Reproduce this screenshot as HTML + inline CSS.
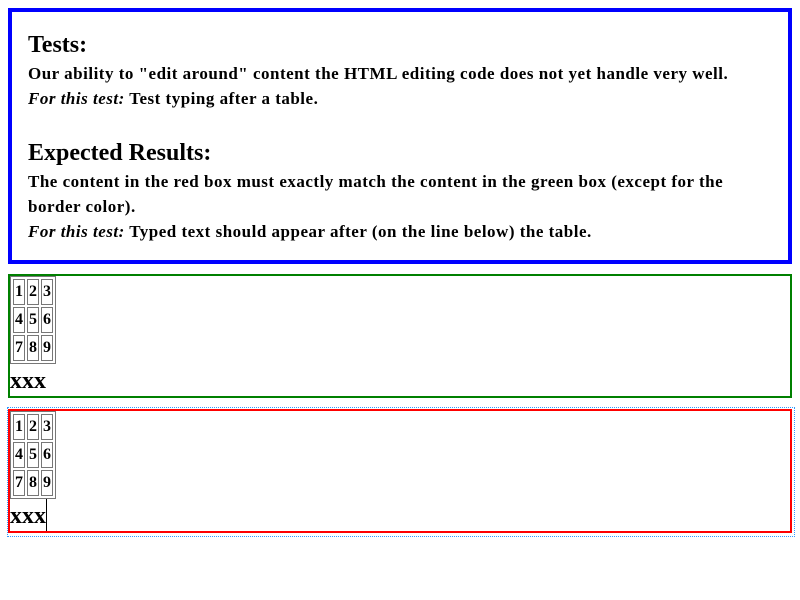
<!DOCTYPE html>
<html><head><style>
body{margin:0;width:800px;height:600px;position:relative;font-family:"Liberation Serif",serif;background:#fff;color:#000}
.a{position:absolute;white-space:nowrap;font-weight:bold}
.p{font-size:17px;line-height:25px;left:28px;letter-spacing:0.5px}
.h{font-size:24px;line-height:30px;left:28px}
#blue{position:absolute;left:8px;top:8px;width:776px;height:248px;border:4px solid #00f}
.box{position:absolute;left:8px;width:780px;height:120px}
#g{top:274px;border:2px solid green}
#r{top:409px;border:2px solid red}
#dot{position:absolute;left:7px;top:407px;width:786px;height:128px;border:1px dotted #39f}
table{position:absolute;left:0;top:0;border:1px solid #777;border-spacing:2px;font:bold 16px/22px "Liberation Serif",serif}
td{border:1px solid #777;padding:1px 1px;width:8px;text-align:center}
.x{position:absolute;left:0;top:91px;font:bold 24px/28px "Liberation Serif",serif}
.cur{position:absolute;left:36px;top:88px;width:1px;height:32px;background:#000}
</style></head><body>
<div id="blue"></div>
<div class="a h" style="top:30px">Tests:</div>
<div class="a p" style="top:61px">Our ability to "edit around" content the HTML editing code does not yet handle very well.</div>
<div class="a p" style="top:86px"><i>For this test:</i> Test typing after a table.</div>
<div class="a h" style="top:138px">Expected Results:</div>
<div class="a p" style="top:169px">The content in the red box must exactly match the content in the green box (except for the</div>
<div class="a p" style="top:194px">border color).</div>
<div class="a p" style="top:219px"><i>For this test:</i> Typed text should appear after (on the line below) the table.</div>
<div class="box" id="g"><table><tr><td>1</td><td>2</td><td>3</td></tr><tr><td>4</td><td>5</td><td>6</td></tr><tr><td>7</td><td>8</td><td>9</td></tr></table><div class="x">xxx</div></div>
<div id="dot"></div>
<div class="box" id="r"><table><tr><td>1</td><td>2</td><td>3</td></tr><tr><td>4</td><td>5</td><td>6</td></tr><tr><td>7</td><td>8</td><td>9</td></tr></table><div class="x">xxx</div><div class="cur"></div></div>
</body></html>
